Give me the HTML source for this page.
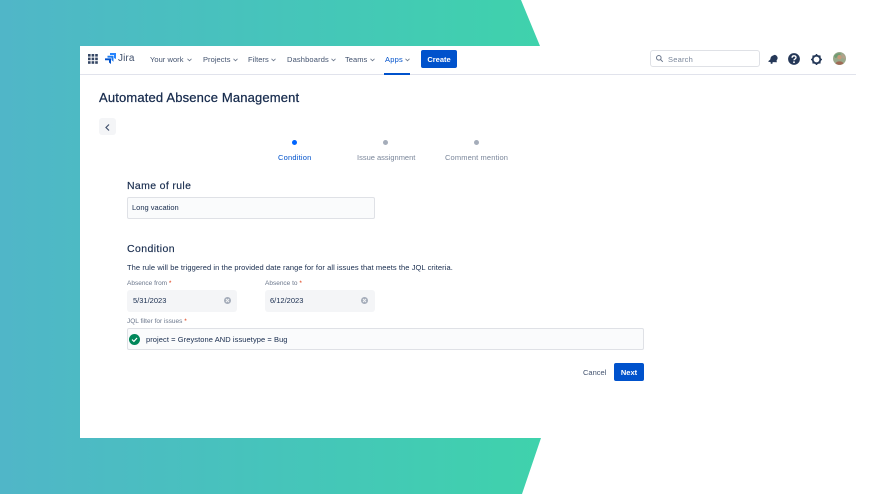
<!DOCTYPE html>
<html><head><meta charset="utf-8">
<style>
html,body{margin:0;padding:0;background:#fff}
body{width:870px;height:494px;position:relative;overflow:hidden;font-family:"Liberation Sans",sans-serif;color:#172b4d}
.bg{position:absolute;left:0;top:0;width:870px;height:494px;background:linear-gradient(90deg,#50b6c8 0,#46c4bb 270px,#3fd2ac 540px);clip-path:polygon(0 0,521px 0,540px 46px,80px 46px,80px 438px,541px 438px,522px 494px,0 494px)}
.wrap{position:absolute;left:0;top:0;width:870px;height:494px;filter:blur(.3px)}
.t{position:absolute;white-space:nowrap;line-height:1}
.nav{font-size:7.5px;color:#42526e;top:56px;letter-spacing:.05px}
.chev{position:absolute;top:57.5px}
.box{position:absolute;box-sizing:border-box;border-radius:2px}
.dot{position:absolute;width:5px;height:5px;border-radius:50%;top:140px;background:#a5adba}
svg{position:absolute;overflow:visible}
.r{color:#de350b}
</style></head><body>
<div class="bg"></div>
<div class="wrap">
<div class="box" style="left:80px;top:74px;width:776px;height:1px;background:#e1e3ec;border-radius:0"></div>

<svg style="left:88px;top:54px" width="10" height="10" fill="#344563"><rect x="0" y="0" width="2.6" height="2.6"/><rect x="3.6" y="0" width="2.6" height="2.6"/><rect x="7.2" y="0" width="2.6" height="2.6"/><rect x="0" y="3.6" width="2.6" height="2.6"/><rect x="3.6" y="3.6" width="2.6" height="2.6"/><rect x="7.2" y="3.6" width="2.6" height="2.6"/><rect x="0" y="7.2" width="2.6" height="2.6"/><rect x="3.6" y="7.2" width="2.6" height="2.6"/><rect x="7.2" y="7.2" width="2.6" height="2.6"/></svg>
<svg style="left:105px;top:53px" width="11" height="11"><path d="M5 0H11V6L9 5V2H5z" fill="#2684ff"/><path d="M2.5 2.7H8.5V8.7L6.5 7V4.6H2.5z" fill="#1f7cf0"/><path d="M0 5.4H6V11L4 9.5V7.3H0z" fill="#0052cc"/></svg>
<div class="t" style="left:118px;top:54px;font-size:10px;color:#42526e;letter-spacing:.1px">Jira</div>

<div class="t nav" style="left:150px">Your work</div>
<div class="t nav" style="left:203px">Projects</div>
<div class="t nav" style="left:248px">Filters</div>
<div class="t nav" style="left:287px;letter-spacing:.15px">Dashboards</div>
<div class="t nav" style="left:345px">Teams</div>
<div class="t nav" style="left:385px;color:#0052cc;letter-spacing:.2px">Apps</div>
<svg class="chev" style="left:187px" width="5" height="4" fill="none" stroke="#6b778c" stroke-width=".8"><path d="M.5 .8L2.5 2.8L4.5 .8"/></svg>
<svg class="chev" style="left:233px" width="5" height="4" fill="none" stroke="#6b778c" stroke-width=".8"><path d="M.5 .8L2.5 2.8L4.5 .8"/></svg>
<svg class="chev" style="left:271px" width="5" height="4" fill="none" stroke="#6b778c" stroke-width=".8"><path d="M.5 .8L2.5 2.8L4.5 .8"/></svg>
<svg class="chev" style="left:331px" width="5" height="4" fill="none" stroke="#6b778c" stroke-width=".8"><path d="M.5 .8L2.5 2.8L4.5 .8"/></svg>
<svg class="chev" style="left:370px" width="5" height="4" fill="none" stroke="#6b778c" stroke-width=".8"><path d="M.5 .8L2.5 2.8L4.5 .8"/></svg>
<svg class="chev" style="left:405px" width="5" height="4" fill="none" stroke="#6b778c" stroke-width=".8"><path d="M.5 .8L2.5 2.8L4.5 .8"/></svg>
<div class="box" style="left:384px;top:73px;width:26px;height:1.5px;background:#0052cc;border-radius:0"></div>
<div class="box" style="left:421px;top:50px;width:36px;height:18px;background:#0052cc"></div>
<div class="t" style="left:421px;width:36px;text-align:center;top:56px;font-size:7.5px;font-weight:bold;color:#fff">Create</div>

<div class="box" style="left:650px;top:50px;width:110px;height:17px;border:1px solid #dfe1e6;border-radius:3px;background:#fff"></div>
<svg style="left:656px;top:55px" width="7" height="7" fill="none" stroke="#6b778c" stroke-width="1"><circle cx="2.8" cy="2.8" r="2.3"/><path d="M4.5 4.5L6.8 6.8"/></svg>
<div class="t" style="left:668px;top:55.5px;font-size:7.5px;color:#7a869a;letter-spacing:.2px">Search</div>

<svg style="left:768px;top:54px" width="10" height="10" fill="#253858"><path d="M5.6 1.2C7 .2 9.2 1.6 9.6 3.6C9.8 4.6 9.2 5.6 8.6 6.2L8.8 8.2L1.6 8L0 7.4L2.2 5.6L2.8 3.2C3.2 2.4 4.4 1.6 5.6 1.2z"/><circle cx="3.6" cy="8.8" r="1.1"/></svg>
<svg style="left:788px;top:53px" width="12" height="12"><circle cx="6" cy="6" r="5.9" fill="#253858"/><path d="M4.1 4.7C4.1 2.2 8 2.2 8 4.5C8 6 6 6 6 7.3" fill="none" stroke="#fff" stroke-width="1.4"/><circle cx="6" cy="9.2" r=".9" fill="#fff"/></svg>
<svg style="left:811px;top:53.5px" width="11" height="11"><circle cx="5.5" cy="5.5" r="3.8" fill="none" stroke="#253858" stroke-width="1.8"/><g stroke="#253858" stroke-width="1.5"><path d="M5.5 0V1.8M5.5 9.2V11M0 5.5H1.8M9.2 5.5H11M1.6 1.6L2.9 2.9M8.1 8.1L9.4 9.4M1.6 9.4L2.9 8.1M8.1 2.9L9.4 1.6"/></g></svg>
<svg style="left:833px;top:52px" width="13" height="13"><circle cx="6.5" cy="6.5" r="6.5" fill="#9aa88a"/><path d="M1 4C3 1 6 1 8 1.5L6 5L2 6z" fill="#6f9c72"/><path d="M9 1.5C11 2.5 12.5 5 12.5 7L9.5 6z" fill="#b5a08c"/><circle cx="6.5" cy="5.2" r="2.2" fill="#c79a7a"/><path d="M2.6 11.5C3.2 8.6 9.8 8.6 10.4 11.5C8.5 13.2 4.5 13.2 2.6 11.5z" fill="#a06a55"/></svg>

<div class="t" style="left:99px;top:91px;font-size:13px;color:#172b4d;letter-spacing:.16px;-webkit-text-stroke:.25px #172b4d">Automated Absence Management</div>
<div class="box" style="left:99px;top:118px;width:17px;height:17px;background:#f4f5f7;border-radius:3px"></div>
<svg style="left:105px;top:123.5px" width="5" height="7" fill="none" stroke="#42526e" stroke-width="1.2"><path d="M4 .5L1 3.5L4 6.5"/></svg>

<div class="dot" style="left:292px;background:#0065ff"></div>
<div class="dot" style="left:383px"></div>
<div class="dot" style="left:474px"></div>
<div class="t" style="left:278px;top:154px;font-size:7.5px;color:#0052cc;letter-spacing:.2px">Condition</div>
<div class="t" style="left:357px;top:154px;font-size:7.5px;color:#7a869a">Issue assignment</div>
<div class="t" style="left:445px;top:154px;font-size:7.5px;color:#7a869a;letter-spacing:.12px">Comment mention</div>

<div class="t" style="left:127px;top:181px;font-size:10.5px;color:#172b4d;letter-spacing:.35px;-webkit-text-stroke:.15px #172b4d">Name of rule</div>
<div class="box" style="left:127px;top:197px;width:248px;height:22px;background:#fafbfc;border:1px solid #dfe1e6"></div>
<div class="t" style="left:132px;top:204px;font-size:7.5px;color:#172b4d">Long vacation</div>

<div class="t" style="left:127px;top:243.5px;font-size:10.5px;color:#172b4d;letter-spacing:.4px;-webkit-text-stroke:.15px #172b4d">Condition</div>
<div class="t" style="left:127px;top:264px;font-size:7.5px;color:#172b4d;letter-spacing:.08px">The rule will be triggered in the provided date range for for all issues that meets the JQL criteria.</div>

<div class="t" style="left:127px;top:281px;font-size:6.5px;color:#6b778c">Absence from<span class="r"> *</span></div>
<div class="box" style="left:127px;top:290px;width:110px;height:22px;background:#f4f5f7;border-radius:3px"></div>
<div class="t" style="left:133px;top:297px;font-size:7.5px;color:#172b4d">5/31/2023</div>
<svg style="left:224px;top:297px" width="7" height="7"><circle cx="3.5" cy="3.5" r="3.5" fill="#a5adba"/><path d="M2 2L5 5M5 2L2 5" stroke="#f4f5f7" stroke-width=".9"/></svg>

<div class="t" style="left:265px;top:281px;font-size:6.5px;color:#6b778c">Absence to<span class="r"> *</span></div>
<div class="box" style="left:265px;top:290px;width:110px;height:22px;background:#f4f5f7;border-radius:3px"></div>
<div class="t" style="left:270px;top:297px;font-size:7.5px;color:#172b4d">6/12/2023</div>
<svg style="left:361px;top:297px" width="7" height="7"><circle cx="3.5" cy="3.5" r="3.5" fill="#a5adba"/><path d="M2 2L5 5M5 2L2 5" stroke="#f4f5f7" stroke-width=".9"/></svg>

<div class="t" style="left:127px;top:319px;font-size:6.5px;color:#6b778c">JQL filter for issues<span class="r"> *</span></div>
<div class="box" style="left:127px;top:328px;width:517px;height:22px;background:#fafbfc;border:1px solid #dfe1e6"></div>
<svg style="left:129px;top:333.5px" width="11" height="11"><circle cx="5.5" cy="5.5" r="5.5" fill="#00875a"/><path d="M3 5.6L4.9 7.4L8 4" fill="none" stroke="#fff" stroke-width="1.2"/></svg>
<div class="t" style="left:146px;top:336px;font-size:7.5px;color:#172b4d;letter-spacing:.07px">project = Greystone AND issuetype = Bug</div>

<div class="t" style="left:583px;top:368.5px;font-size:7.5px;color:#42526e">Cancel</div>
<div class="box" style="left:614px;top:363px;width:30px;height:18px;background:#0052cc"></div>
<div class="t" style="left:614px;width:30px;text-align:center;top:368.5px;font-size:7.5px;font-weight:bold;color:#fff">Next</div>
</div>
</body></html>
